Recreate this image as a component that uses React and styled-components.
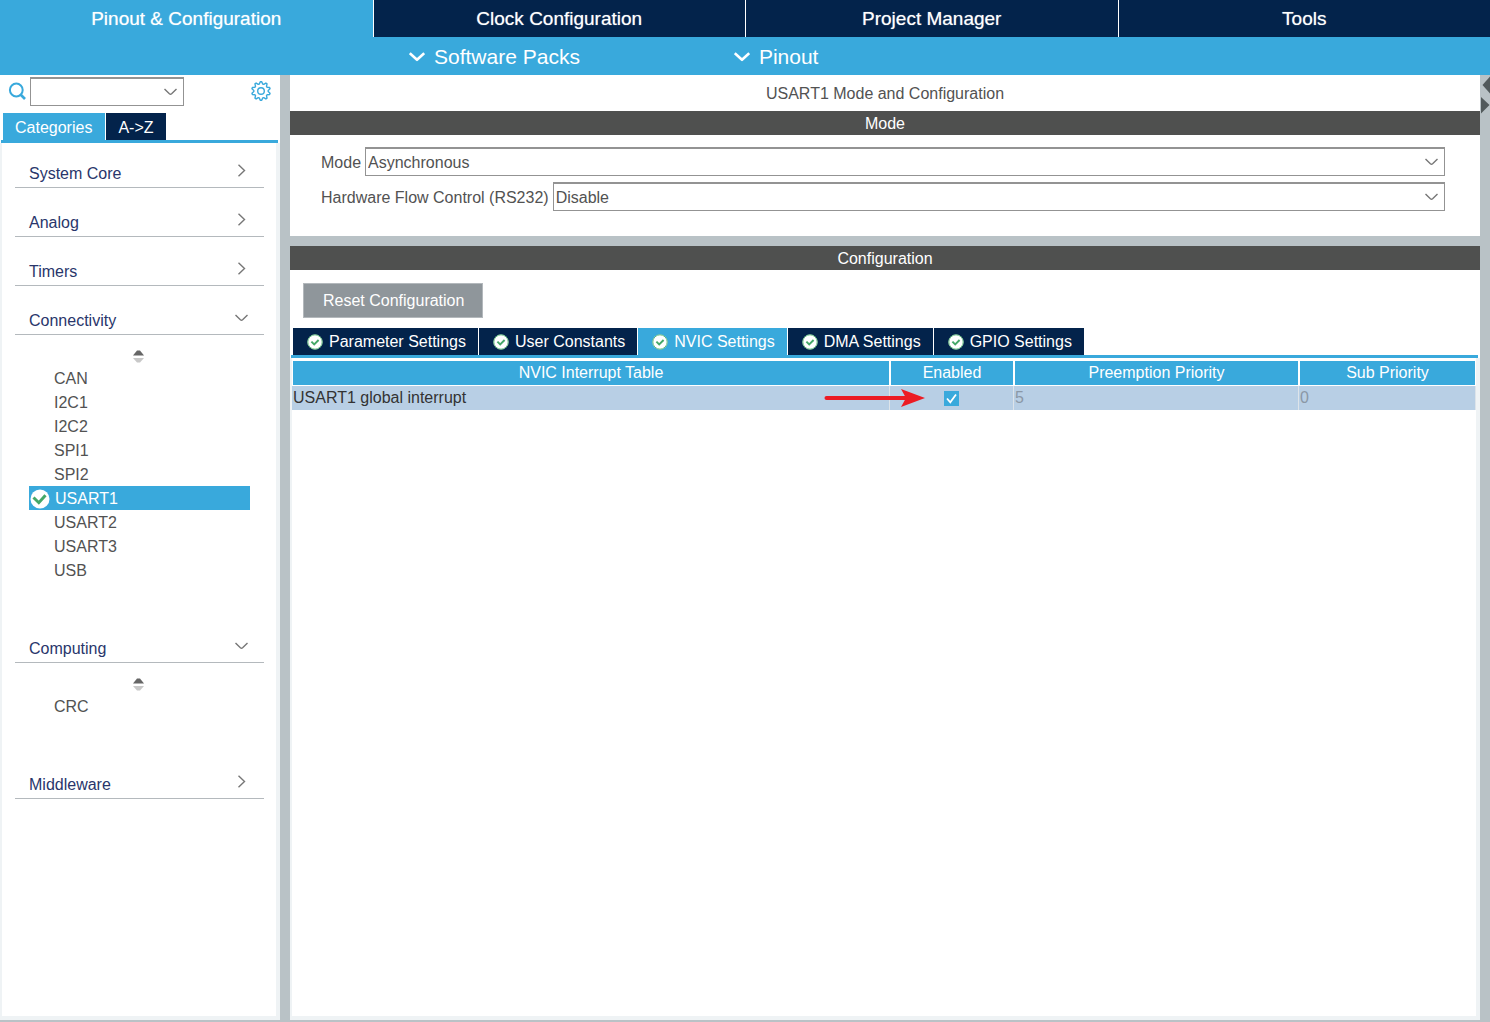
import React from 'react';
import styled, { createGlobalStyle } from 'styled-components';

const blue = '#39a9dc';
const navy = '#03234b';
const grey = '#b9c2c6';
const edge = '#eff3f5';

const GlobalStyle = createGlobalStyle`
  * { box-sizing: border-box; }
  body {
    margin: 0;
    background: ${grey};
    color: #525252;
    font: 16px/24px "Liberation Sans", Arial, sans-serif;
  }
  button, select { font: inherit; }
`;

const Page = styled.div`
  display: flex;
  flex-direction: column;
  min-height: 100vh;
`;

const TopTabs = styled.nav`
  display: grid;
  grid-template-columns: repeat(4, 1fr);
  background: ${navy};
`;

const TopTab = styled.button`
  height: 37px;
  padding: 0;
  border: 0;
  border-left: ${p => (p.$active ? '0' : '1px solid #fff')};
  background: ${p => (p.$active ? blue : navy)};
  color: #fff;
  font-size: 19px;
  text-shadow: 0 0 1px rgba(255, 255, 255, 0.6);
`;

const SubBar = styled.div`
  display: flex;
  align-items: center;
  gap: 154px;
  height: 38px;
  padding: 2px 0 0 409px;
  background: ${blue};
`;

const SubButton = styled.button`
  display: flex;
  align-items: center;
  gap: 9px;
  padding: 0;
  border: 0;
  background: none;
  color: #fff;
  font-size: 21px;
`;

const Body = styled.div`
  display: flex;
  flex: 1;
  padding-bottom: 2px;
`;

const Sidebar = styled.aside`
  display: flex;
  flex-direction: column;
  flex: none;
  width: 280px;
  margin-right: 10px;
  background: #fff;
`;

const SearchRow = styled.div`
  display: flex;
  align-items: center;
  gap: 4px;
  height: 38px;
  padding: 2px 9px 8px 8px;
`;

const SelectBox = styled.span`
  display: grid;
  flex: ${p => (p.$width ? 'none' : '1')};
  width: ${p => p.$width || 'auto'};
  align-items: center;

  > * { grid-area: 1 / 1; }
  > svg {
    justify-self: end;
    margin-right: 7px;
    pointer-events: none;
  }
`;

const Select = styled.select`
  appearance: none;
  width: 100%;
  height: 29px;
  padding: 2px 24px 0 2px;
  border: 1px solid #939393;
  border-top-width: 2px;
  border-radius: 0;
  background: #fff;
  color: #525252;
`;

const GearButton = styled.button`
  display: flex;
  margin-left: auto;
  padding: 0;
  border: 0;
  background: none;
`;

const TabStrip = styled.div`
  display: flex;
  gap: 1px;
  margin: 0 2px 0 1px;
  padding-left: 2px;
  border-bottom: 3px solid ${blue};
`;

const Tab = styled.button`
  display: flex;
  align-items: center;
  gap: 6px;
  height: 27px;
  padding: ${p => p.$pad};
  border: 0;
  background: ${p => (p.$active ? blue : navy)};
  color: #fff;
`;

const CategoryList = styled.div`
  display: flex;
  flex-direction: column;
  flex: 1;
  gap: 20px;
  padding: 16px 12px 0 13px;
  border: solid ${edge};
  border-width: 0 4px 4px 2px;
`;

const CategoryHead = styled.button`
  display: flex;
  align-items: center;
  justify-content: space-between;
  width: 100%;
  height: 29px;
  padding: 1px 16px 0 14px;
  border: 0;
  border-bottom: 1px solid #b4b9bd;
  background: none;
  color: #29366b;

  svg { margin-bottom: 6px; }
`;

const SortRow = styled.div`
  height: 31px;
  padding: 15px 0 0 118px;
  line-height: 0;
`;

const Peripherals = styled.ul`
  margin: 0 14px 32px;
  padding: 0;
  list-style: none;
`;

const Peripheral = styled.li`
  display: flex;
  align-items: center;
  gap: 5px;
  height: 24px;
  padding-top: 1px;
  padding-left: ${p => (p.$active ? '1px' : '25px')};
  background: ${p => (p.$active ? blue : 'none')};
  color: ${p => (p.$active ? '#fff' : '#525252')};
`;

const Main = styled.main`
  display: flex;
  flex-direction: column;
  flex: 1;
  gap: 10px;
  min-width: 0;
`;

const Panel = styled.section`
  display: flex;
  flex-direction: column;
  flex: ${p => (p.$grow ? '1' : 'none')};
  background: #fff;
`;

const Title = styled.h1`
  margin: 0;
  padding: 7px 0 5px;
  font-size: 16px;
  font-weight: normal;
  text-align: center;
`;

const Bar = styled.h2`
  height: 24px;
  margin: 0;
  background: #4f504f;
  color: #fff;
  font-size: 16px;
  font-weight: normal;
  line-height: 26px;
  text-align: center;
`;

const ModeForm = styled.form`
  display: flex;
  flex-direction: column;
  gap: 6px;
  padding: 12px 35px 25px 31px;
`;

const Field = styled.label`
  display: flex;
  align-items: center;
  gap: 4px;
`;

const FieldName = styled.span`
  padding-top: 2px;
`;

const ResetButton = styled.button`
  align-self: flex-start;
  height: 35px;
  margin: 13px 13px 10px;
  padding: 0 18px 0 19px;
  border: 1px solid #b3b8bc;
  background: #8f969b;
  color: #fff;
`;

const TableArea = styled.div`
  flex: 1;
  padding: 3px 0 0;
  border: solid ${edge};
  border-width: 0 4px 4px 2px;
`;

const Table = styled.table`
  width: 100%;
  table-layout: fixed;
  border-collapse: separate;
  border-spacing: 0;
`;

const Col = styled.col`
  width: ${p => p.$width};
`;

const Th = styled.th`
  height: 25px;
  padding: 0;
  border: solid #fff;
  border-width: 0 1px 1px;
  background: ${blue};
  color: #fff;
  font-weight: normal;
`;

const Td = styled.td`
  position: relative;
  height: 24px;
  padding: 0 1px;
  border-right: 1px solid #dde4ea;
  background: #b8cfe5;
  color: ${p => (p.$muted ? '#8b98a6' : '#333')};
`;

const CheckBox = styled.span`
  display: grid;
  width: 15px;
  margin: 0 auto;

  > * { grid-area: 1 / 1; }
  > svg { pointer-events: none; }
  > input {
    appearance: none;
    width: 15px;
    height: 15px;
    margin: 0;
    background: ${blue};
  }
`;

const Pointer = styled.svg`
  position: absolute;
  top: 3px;
  left: -66px;
`;

const RightStrip = styled.div`
  flex: none;
  width: 10px;
  line-height: 0;
`;

const Chevron = ({ right, bold }) => (
  <svg width={bold ? 16 : 13} height={bold ? 10 : 13} viewBox={bold ? '0 0 16 10' : '0 0 13 13'} fill="none"
    stroke={bold ? '#fff' : '#777'} strokeWidth={bold ? 2.6 : 1.4}>
    {bold && <path d="M.8 1.2 L8 7.8 L15.2 1.2" strokeLinejoin="round" />}
    {!bold && right && <path d="M3.5 .8 L9.5 6.5 L3.5 12.2" />}
    {!bold && !right && <path d="M.5 4 L5.4 8.8 Q6.5 9.8 7.6 8.8 L12.5 4" />}
  </svg>
);

const SearchIcon = () => (
  <svg width="18" height="18" viewBox="0 0 18 18" fill="none" stroke={blue}>
    <circle cx="8.3" cy="8" r="6.4" strokeWidth="2" />
    <path d="M12.5 12.5 L17 17" strokeWidth="2.6" />
  </svg>
);

// outline of a ten-toothed wheel around 10,10
const gearPoints = Array.from({ length: 40 }, (_, i) => {
  const r = i % 4 < 2 ? 9.3 : 7.2;
  const a = ((i - 0.5) * Math.PI) / 20 - Math.PI / 2;
  return `${(10 + r * Math.cos(a)).toFixed(2)},${(10 + r * Math.sin(a)).toFixed(2)}`;
}).join(' ');

const GearIcon = () => (
  <svg width="20" height="20" viewBox="0 0 20 20" fill="none" stroke={blue} strokeWidth="1.4" strokeLinejoin="round">
    <polygon points={gearPoints} />
    <circle cx="10" cy="10" r="3.3" />
  </svg>
);

const SortIcon = () => (
  <svg width="11" height="13" viewBox="0 0 11 13">
    <path d="M0 5.5 L4 0.5 H7 L11 5.5 Z" fill="#666" />
    <path d="M0 8 H11 L7 12.5 H4 Z" fill="#c8c8c8" />
  </svg>
);

const OkIcon = ({ size }) => (
  <svg width={size} height={size} viewBox="0 0 20 20" fill="none">
    <circle cx="10" cy="10" r="9.5" fill="#fff" />
    {size < 20 && <circle cx="10" cy="10" r="9" stroke="#5cb879" strokeWidth="1.2" />}
    <path d={size < 20 ? 'M5.5 9.5 L9 13 L14.5 7.5' : 'M3.5 8.5 L8.8 13.7 L15.5 6.2'} stroke="#45a868" strokeWidth={size < 20 ? 2.4 : 3} />
  </svg>
);

const categories = [
  { name: 'System Core' },
  { name: 'Analog' },
  { name: 'Timers' },
  { name: 'Connectivity', items: ['CAN', 'I2C1', 'I2C2', 'SPI1', 'SPI2', 'USART1', 'USART2', 'USART3', 'USB'] },
  { name: 'Computing', items: ['CRC'] },
  { name: 'Middleware' },
];

const settings = ['Parameter Settings', 'User Constants', 'NVIC Settings', 'DMA Settings', 'GPIO Settings'];

function Category({ name, items }) {
  return (
    <div>
      <CategoryHead aria-expanded={!!items}>
        {name}
        <Chevron right={!items} />
      </CategoryHead>
      {items && (
        <>
          <SortRow><SortIcon /></SortRow>
          <Peripherals>
            {items.map(item => (
              <Peripheral key={item} $active={item === 'USART1'}>
                {item === 'USART1' && <OkIcon size={20} />}
                {item}
              </Peripheral>
            ))}
          </Peripherals>
        </>
      )}
    </div>
  );
}

function App() {
  return (
    <Page>
      <GlobalStyle />
      <TopTabs>
        <TopTab $active>Pinout &amp; Configuration</TopTab>
        <TopTab>Clock Configuration</TopTab>
        <TopTab>Project Manager</TopTab>
        <TopTab>Tools</TopTab>
      </TopTabs>
      <SubBar>
        <SubButton><Chevron bold />Software Packs</SubButton>
        <SubButton><Chevron bold />Pinout</SubButton>
      </SubBar>

      <Body>
        <Sidebar>
          <SearchRow>
            <SearchIcon />
            <SelectBox $width="154px">
              <Select aria-label="Search peripherals" defaultValue=""><option value="" /></Select>
              <Chevron />
            </SelectBox>
            <GearButton aria-label="Settings"><GearIcon /></GearButton>
          </SearchRow>
          <TabStrip>
            <Tab $active $pad="2px 13px 0 12px">Categories</Tab>
            <Tab $pad="2px 12px 0">A-&gt;Z</Tab>
          </TabStrip>
          <CategoryList>
            {categories.map(c => <Category key={c.name} {...c} />)}
          </CategoryList>
        </Sidebar>

        <Main>
          <Panel>
            <Title>USART1 Mode and Configuration</Title>
            <Bar>Mode</Bar>
            <ModeForm>
              <Field>
                <FieldName>Mode</FieldName>
                <SelectBox>
                  <Select><option>Asynchronous</option></Select>
                  <Chevron />
                </SelectBox>
              </Field>
              <Field>
                <FieldName>Hardware Flow Control (RS232)</FieldName>
                <SelectBox>
                  <Select><option>Disable</option></Select>
                  <Chevron />
                </SelectBox>
              </Field>
            </ModeForm>
          </Panel>

          <Panel $grow>
            <Bar>Configuration</Bar>
            <ResetButton>Reset Configuration</ResetButton>
            <TabStrip>
              {settings.map(s => (
                <Tab key={s} $pad="1px 12px 0 14px" $active={s === 'NVIC Settings'}>
                  <OkIcon size={16} />
                  {s}
                </Tab>
              ))}
            </TabStrip>
            <TableArea>
              <Table>
                <colgroup>
                  <Col />
                  <Col $width="124px" />
                  <Col $width="285px" />
                  <Col $width="177px" />
                </colgroup>
                <thead>
                  <tr>
                    <Th>NVIC Interrupt Table</Th>
                    <Th>Enabled</Th>
                    <Th>Preemption Priority</Th>
                    <Th>Sub Priority</Th>
                  </tr>
                </thead>
                <tbody>
                  <tr>
                    <Td>USART1 global interrupt</Td>
                    <Td>
                      <CheckBox>
                        <input type="checkbox" aria-label="Enable USART1 global interrupt" defaultChecked />
                        <svg width="15" height="15" viewBox="0 0 15 15" fill="none" stroke="#fff" strokeWidth="1.8">
                          <path d="M3 7.5 L6.3 11.3 L12 3.5" />
                        </svg>
                      </CheckBox>
                      <Pointer width="102" height="18" viewBox="0 0 102 18">
                        <path d="M2.5 9 H86" stroke="#ec1c24" strokeWidth="4" strokeLinecap="round" />
                        <path d="M77 0 L101 9 L77 18 L82 9 Z" fill="#ec1c24" />
                      </Pointer>
                    </Td>
                    <Td $muted>5</Td>
                    <Td $muted>0</Td>
                  </tr>
                </tbody>
              </Table>
            </TableArea>
          </Panel>
        </Main>

        <RightStrip>
          <svg width="10" height="40" viewBox="0 0 10 40" fill="#525a5c">
            <path d="M2.5 10 L10 1.5 V18.5 Z" />
            <path d="M1 22 L9.5 30 L1 38.5 Z" />
          </svg>
        </RightStrip>
      </Body>
    </Page>
  );
}

export default App;
